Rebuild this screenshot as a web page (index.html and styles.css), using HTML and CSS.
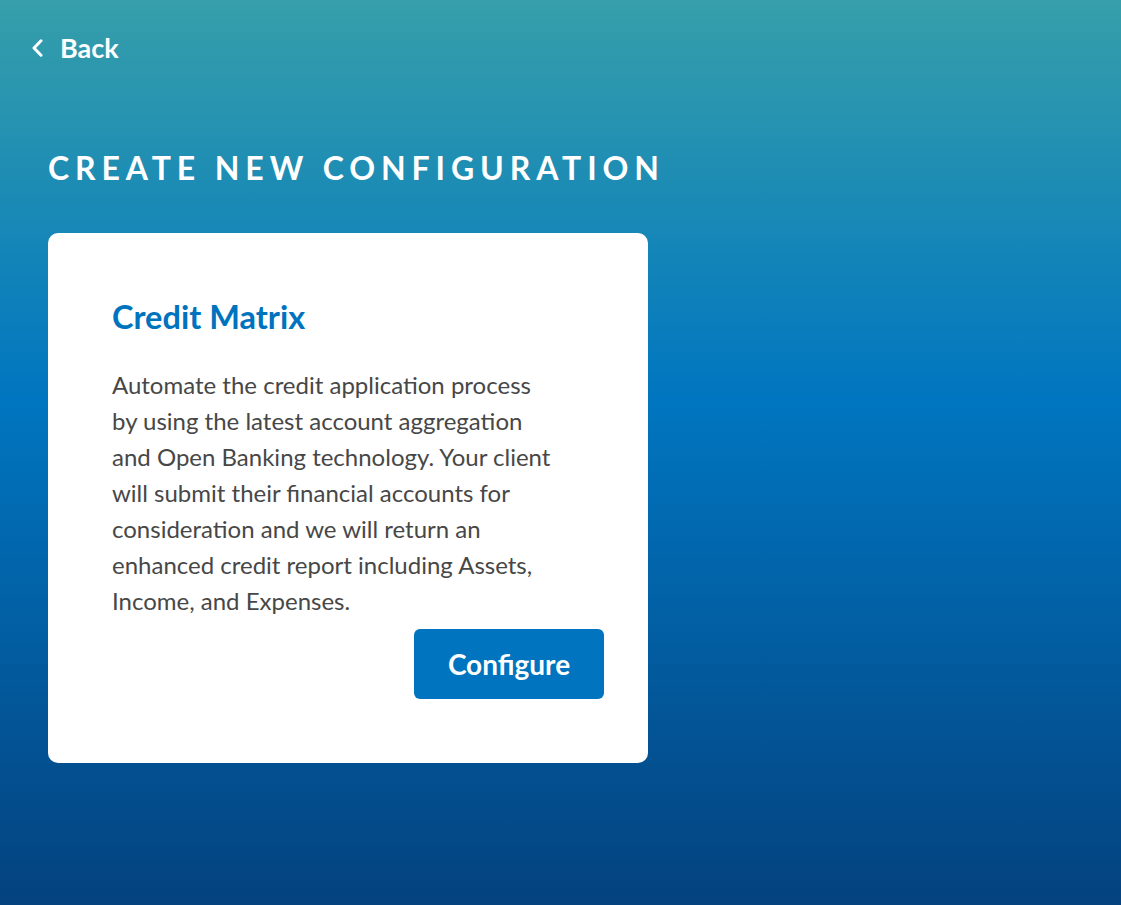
FILE: index.html
```html
<!doctype html>
<html>
<head>
<meta charset="utf-8">
<title>Create new configuration</title>
<link rel="stylesheet" href="styles.css">
</head>
<body>
    <div class="page">
        <a class="back" href="#">
            <svg class="back-icon" width="12" height="18" viewBox="0 0 12 18"><path d="M10 1.8 L3 9 L10 16.2" fill="none" stroke="#fff" stroke-width="3" stroke-linecap="round" stroke-linejoin="round"/></svg>
            <span>Back</span>
        </a>
        <h1 class="page-title">CREATE NEW CONFIGURATION</h1>
        <div class="card">
            <h2 class="card-title">Credit Matrix</h2>
            <p class="card-text">Automate the credit application process by using the latest account aggregation and Open Banking technology. Your client will submit their financial accounts for consideration and we will return an enhanced credit report including Assets, Income, and Expenses.</p>
            <button class="btn">Configure</button>
        </div>
    </div>
</body>
</html>
```
FILE: styles.css
```css
* {margin:0; padding:0; box-sizing:border-box;}
html, body {height:100%;}
body {font-family:Lato, "Open Sans", sans-serif; background:linear-gradient(180deg, #369faa 0%, #0076c0 44%, #04427f 100%); color:#fff;}
.page {display:flex; flex-direction:column; align-items:flex-start; padding:30px 48px 0 48px;}
.back {display:flex; align-items:center; gap:17px; margin-left:-17px; color:#fff; text-decoration:none; font-size:27px; font-weight:700; line-height:36px;}
.back-icon {display:block;}
.page-title {margin-top:82px; font-size:32px; font-weight:700; letter-spacing:5.9px; line-height:40px;}
.card {margin-top:45px; width:600px; height:530px; background:#fff; border-radius:10px; padding:64px 44px 64px 64px; display:flex; flex-direction:column;}
.card-title {color:#0073be; font-size:32.5px; font-weight:700; line-height:40px;}
.card-text {margin-top:30px; max-width:440px; color:#474747; font-size:24px; line-height:36px;}
.btn {align-self:flex-end; margin-top:10px; width:190px; height:70px; border:none; border-radius:6px; background:#0074bf; color:#fff; font-family:inherit; font-size:28px; font-weight:700;}
```
